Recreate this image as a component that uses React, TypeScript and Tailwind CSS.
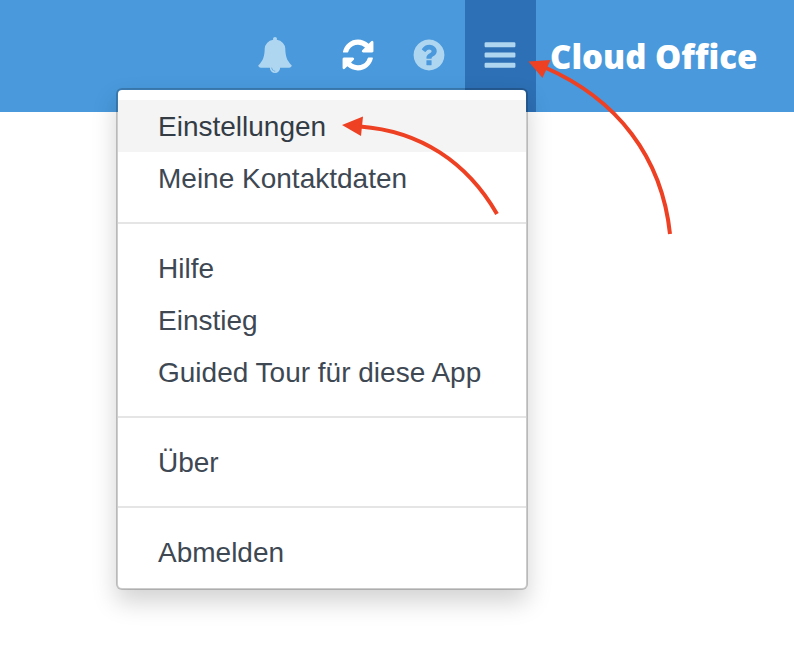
import React from "react";
import clsx from "clsx";

const icons = {
	bell: "M912 1696q0-16-16-16-59 0-101.5-42.5t-42.5-101.5q0-16-16-16t-16 16q0 73 51.5 124.5t124.5 51.5q16 0 16-16zm816-288q0 52-38 90t-90 38h-448q0 106-75 181t-181 75-181-75-75-181h-448q-52 0-90-38t-38-90q50-42 91-88t85-119.5 74.5-158.5 50-206 19.5-260q0-152 117-282.5t307-158.5q-8-19-8-39 0-40 28-68t68-28 68 28 28 68q0 20-8 39 190 28 307 158.5t117 282.5q0 139 19.5 260t50 206 74.5 158.5 85 119.5 91 88z",
	refresh:
		"M1639 1056q0 5-1 7-64 268-268 434.5t-478 166.5q-146 0-282.5-55t-243.5-157l-129 129q-19 19-45 19t-45-19-19-45v-448q0-26 19-45t45-19h448q26 0 45 19t19 45-19 45l-137 137q71 66 161 102t187 36q134 0 250-65t186-179q11-17 53-117 8-23 30-23h192q13 0 22.5 9.5t9.5 22.5zm25-800v448q0 26-19 45t-45 19h-448q-26 0-45-19t-19-45 19-45l138-138q-148-137-349-137-134 0-250 65t-186 179q-11 17-53 117-8 23-30 23h-199q-13 0-22.5-9.5t-9.5-22.5v-7q65-268 270-434.5t480-166.5q146 0 284 55.5t245 156.5l130-129q19-19 45-19t45 19 19 45z",
	help: "M1024 1376v-192q0-14-9-23t-23-9h-192q-14 0-23 9t-9 23v192q0 14 9 23t23 9h192q14 0 23-9t9-23zm256-672q0-88-55.5-163t-138.5-116-170-41q-243 0-371 213-15 24 8 42l132 100q7 6 19 6 16 0 25-12 53-68 86-92 34-24 86-24 48 0 85.5 26t37.5 59q0 38-20 61t-68 45q-63 28-115.5 86.5t-52.5 125.5v36q0 14 9 23t23 9h192q14 0 23-9t9-23q0-19 21.5-49.5t54.5-49.5q32-18 49-28.5t46-35 44.5-48 28-60.5 12.5-81zm384 192q0 209-103 385.5t-279.5 279.5-385.5 103-385.5-103-279.5-279.5-103-385.5 103-385.5 279.5-279.5 385.5-103 385.5 103 279.5 279.5 103 385.5z",
	bars: "M1664 1344v128q0 26-19 45t-45 19h-1408q-26 0-45-19t-19-45v-128q0-26 19-45t45-19h1408q26 0 45 19t19 45zm0-512v128q0 26-19 45t-45 19h-1408q-26 0-45-19t-19-45v-128q0-26 19-45t45-19h1408q26 0 45 19t19 45zm0-512v128q0 26-19 45t-45 19h-1408q-26 0-45-19t-19-45v-128q0-26 19-45t45-19h1408q26 0 45 19t19 45z",
};

const menuGroups = [
	["Einstellungen", "Meine Kontaktdaten"],
	["Hilfe", "Einstieg", "Guided Tour für diese App"],
	["Über"],
	["Abmelden"],
];

type BarButtonProps = {
	icon: keyof typeof icons;
	label: string;
	className: string;
	expanded?: boolean;
};

const BarButton = ({ icon, label, className, expanded }: BarButtonProps) => (
	<button
		type="button"
		aria-label={label}
		aria-expanded={expanded}
		className={clsx("flex h-full items-center pb-[2px]", className)}>
		<svg
			viewBox="0 0 1792 1792"
			className="size-9 shrink-0 overflow-visible"
			fill="currentColor">
			<path d={icons[icon]} />
		</svg>
	</button>
);

const Menu = () => (
	<div className="absolute right-2 top-[88px] w-[412px] rounded-md border-2 border-black/20 bg-white bg-clip-padding py-[10px] shadow-[0_12px_24px_rgba(0,0,0,0.175)]">
		{menuGroups.map((group, i) => (
			<ul
				key={group[0]}
				className={clsx(i > 0 && "mt-[18px] border-t-2 border-[#e5e5e5] pt-[18px]")}>
				{group.map((item) => (
					<li key={item}>
						<a
							href="#"
							className={clsx(
								"block whitespace-nowrap px-10 pt-[2px] text-[28px] leading-[50px]",
								item === "Einstellungen"
									? "bg-[#f4f4f4] text-[#333c45]"
									: "text-[#3e4853]"
							)}>
							{item}
						</a>
					</li>
				))}
			</ul>
		))}
		<svg
			viewBox="340 110 160 108"
			className="pointer-events-none absolute left-[222px] top-5 h-[108px] w-40">
			<path
				d="M360 126.500C420 131 467 162 497 214"
				fill="none"
				stroke="#ee4023"
				strokeWidth="4"
			/>
			<path d="M342 125L363 116.500L361 136Z" fill="#ee4023" />
		</svg>
	</div>
);

const App = () => {
	return (
		<div className="min-h-screen overflow-hidden bg-white font-['Liberation_Sans',Arial,sans-serif]">
			<header className="flex h-28 justify-end bg-[#4999dc]">
				<nav className="relative flex h-full shrink-0 text-[#afd6f0]">
					<BarButton
						icon="bell"
						label="Benachrichtigungen"
						className="w-24 justify-center"
					/>
					<BarButton
						icon="refresh"
						label="Aktualisieren"
						className="w-[71px] pl-[17px] text-white"
					/>
					<BarButton icon="help" label="Hilfe" className="w-[71px] pl-[17px]" />
					<BarButton
						icon="bars"
						label="Menü"
						className="w-[71px] bg-[#2d70b5] pl-[17px]"
						expanded
					/>
					<Menu />
					<svg
						viewBox="524 52 150 186"
						className="pointer-events-none absolute left-[297px] top-[52px] z-10 h-[186px] w-[150px]">
						<path
							d="M545 67.500C617 99 662 157 670 234"
							fill="none"
							stroke="#ee4023"
							strokeWidth="4"
						/>
						<path d="M528.500 61.500L550.500 60L542.500 78Z" fill="#ee4023" />
					</svg>
				</nav>
				<div className="flex w-[258px] shrink-0 items-center pl-[14px] font-['Open_Sans',sans-serif] text-[33px] font-extrabold leading-none text-white">
					Cloud Office
				</div>
			</header>
		</div>
	);
};

export default App;
